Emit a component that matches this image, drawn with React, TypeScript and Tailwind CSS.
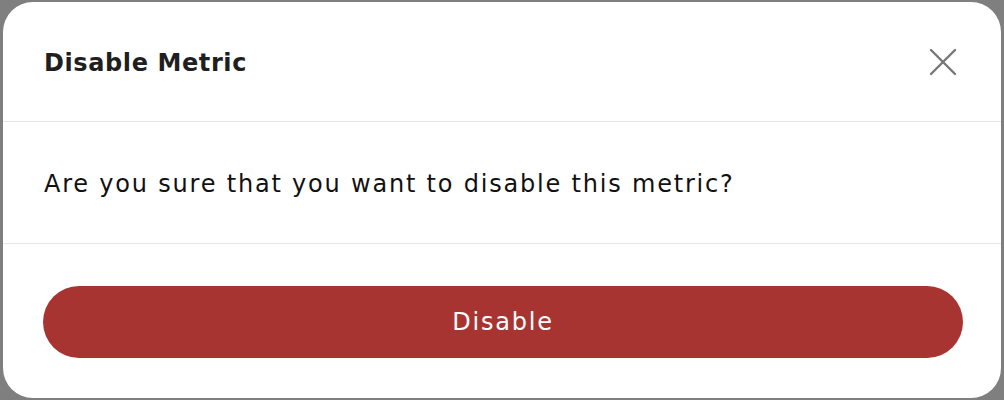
import { X } from "lucide-react";

export default function App() {
    return (
        <div className="h-[400px] w-[1004px] bg-[#7f7f7f] px-[3px] py-[2px] font-['DejaVu_Sans',sans-serif]">
            <div className="flex h-[396px] w-[998px] flex-col overflow-hidden rounded-[30px] bg-white">
                <div className="flex h-[120px] items-center justify-between border-b border-[#e6e6e6] pl-[41px] pr-[34px]">
                    <h3 className="pt-[2px] text-[24px] font-bold tracking-[0.6px] text-[#1f1f1f]">Disable Metric</h3>
                    <button type="button" className="text-[#777777]">
                        <X size={48} strokeWidth={1.2} />
                    </button>
                </div>
                <div className="flex h-[122px] items-center border-b border-[#e6e6e6] pl-[41px]">
                    <p className="pt-[3px] text-[24px] tracking-[1.8px] text-[#111111]">
                        Are you sure that you want to disable this metric?
                    </p>
                </div>
                <div className="flex flex-1 items-start pl-[40px] pr-[38px] pt-[42px]">
                    <button
                        type="button"
                        className="flex h-[72px] w-full items-center justify-center rounded-full bg-[#a83431] text-[24px] tracking-[1.8px] text-white"
                    >
                        Disable
                    </button>
                </div>
            </div>
        </div>
    );
}
